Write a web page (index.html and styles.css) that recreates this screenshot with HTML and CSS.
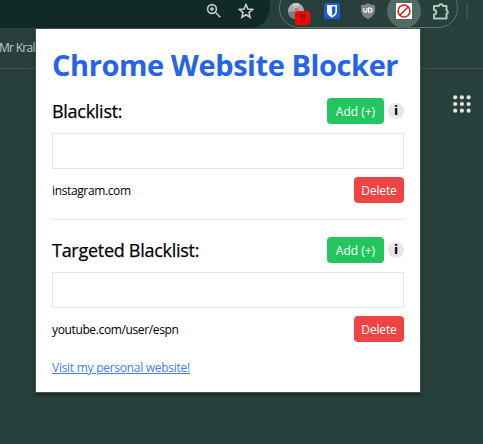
FILE: index.html
```html
<!DOCTYPE html>
<html lang="en">
<head>
<meta charset="utf-8">
<title>Chrome Website Blocker</title>
<link rel="stylesheet" href="styles.css">
</head>
<body>
<header class="toolbar">
  <div class="omnibox">
    <svg class="tool zoom" viewBox="0 0 16 16"><circle cx="6" cy="6" r="4.4"/><path d="M9.3 9.3 14.3 14.3M4 6h4M6 4v4"/></svg>
    <svg class="tool" viewBox="0 0 16 16"><path d="M8 1.5 9.9 6l4.8.4-3.7 3.2 1.1 4.7L8 11.8l-4.1 2.5L5 9.6 1.3 6.4 6.1 6z"/></svg>
  </div>
  <div class="extensions">
    <div class="ext avatar"><svg viewBox="0 0 16 16"><circle cx="8" cy="8" r="8" fill="#a9acaa"/><path d="M8 8 0 9a8 8 0 0 0 7 7z" fill="#777e7b"/><path d="M8 8 4 1a8 8 0 0 1 8 0z" fill="#c5c6c5"/><circle cx="8.5" cy="6.5" r="2" fill="#b77b75"/></svg><span class="badge">!!</span></div>
    <div class="ext"><svg viewBox="0 0 16 16"><rect width="16" height="16" rx="2" fill="#175ddc"/><path d="M3 2h10v6.5c0 3-2.5 4.8-5 6-2.500-1.200-5-3-5-6z" fill="#fff"/><path d="M8 3.600h3.400v5c0 1.800-1.500 3-3.400 4.100z" fill="#175ddc"/></svg></div>
    <div class="ext"><svg viewBox="0 0 16 16"><path d="M8 0c2 1.500 4 2 7 2v5c0 4.500-3 7-7 9-4-2-7-4.500-7-9V2c3 0 5-.5 7-2z" fill="#808483"/><path d="M3.700 5v2.600a1.600 1.600 0 0 0 3.200 0V5M8.700 5v4.200h1.200a2.100 2.100 0 0 0 0-4.200z" fill="none" stroke="#fff" stroke-width="1.200"/></svg></div>
    <div class="ext active"><svg viewBox="0 0 16 16"><rect width="16" height="16" fill="#fff"/><circle cx="8" cy="8" r="5.900" fill="none" stroke="#e01b1b" stroke-width="1.500"/><path d="M4 12 12 4" stroke="#e01b1b" stroke-width="1.500"/></svg></div>
    <div class="ext puzzle"><svg viewBox="0 0 18 18"><path d="M2 4H7A2 1.800 0 0 1 11 4H14.500V8.500A1.700 1.800 0 0 1 14.500 12V16.500H2V12.500A2.200 2.200 0 0 0 2 8.100Z" fill="none" stroke="#a9cbc0" stroke-width="2" stroke-linejoin="round"/></svg></div>
  </div>
  <div class="divider"></div>
</header>
<div class="bookmarks">Mr Krabs</div>
<div class="page">
  <svg class="apps" viewBox="0 0 18 18"><circle cx="2.200" cy="2.300" r="2.100"/><circle cx="8.900" cy="2.300" r="2.100"/><circle cx="15.600" cy="2.300" r="2.100"/><circle cx="2.200" cy="9" r="2.100"/><circle cx="8.900" cy="9" r="2.100"/><circle cx="15.600" cy="9" r="2.100"/><circle cx="2.200" cy="15.700" r="2.100"/><circle cx="8.900" cy="15.700" r="2.100"/><circle cx="15.600" cy="15.700" r="2.100"/></svg>
</div>
<main class="popup">
  <h1>Chrome Website Blocker</h1>
  <section>
    <div class="row head"><h2>Blacklist:</h2><button class="btn add">Add (+)</button><span class="info">i</span></div>
    <input class="field" type="text" aria-label="Website">
    <div class="row item"><span class="site">instagram.com</span><button class="btn delete">Delete</button></div>
  </section>
  <hr>
  <section>
    <div class="row head"><h2>Targeted Blacklist:</h2><button class="btn add">Add (+)</button><span class="info">i</span></div>
    <input class="field" type="text" aria-label="Targeted website">
    <div class="row item"><span class="site">youtube.com/user/espn</span><button class="btn delete">Delete</button></div>
  </section>
  <a class="visit" href="#">Visit my personal website!</a>
</main>
</body>
</html>
```
FILE: styles.css
```css
* { box-sizing: border-box; }
body {
  margin: 0;
  height: 444px;
  overflow: hidden;
  background: #27403b;
  font-family: "Open Sans", "Noto Sans", sans-serif;
  font-size: 12px;
  color: #000;
}
svg { display: block; }
.toolbar { display: flex; height: 28px; }
.omnibox {
  display: flex;
  gap: 16px;
  width: 270px;
  height: 28px;
  padding: 3px 0 0 206px;
  background: #122a26;
  border-bottom-right-radius: 18px 22px;
}
.tool { width: 16px; height: 16px; fill: none; stroke: #c5cbc9; stroke-width: 1.6; }
.zoom path { stroke-width: 1.5; }
.extensions {
  display: flex;
  gap: 20px;
  width: 179px;
  height: 40px;
  margin: -12px 0 0 9px;
  padding: 14px 0 0 8px;
  border: 1px solid #66736f;
  border-radius: 20px;
}
.ext { position: relative; flex: none; width: 16px; height: 16px; }
.ext svg { position: relative; width: 16px; height: 16px; }
.active::before {
  content: "";
  position: absolute;
  inset: -9px;
  border-radius: 50%;
  background: #506c65;
}
.ext.puzzle svg { width: 18px; height: 18px; margin-top: -1px; }
.badge {
  position: absolute;
  left: 7px;
  top: 8px;
  width: 15px;
  height: 14px;
  border-radius: 3px;
  background: #f00;
  color: #200;
  font: 600 10px/14px "Open Sans", sans-serif;
  text-align: center;
}
.divider { width: 2px; height: 16px; margin: 3px 0 0 8px; background: #36544e; }
.bookmarks {
  height: 41px;
  padding-top: 12px;
  border-bottom: 1px solid #45504d;
  color: #c3c8c6;
  line-height: 16px;
  letter-spacing: -.7px;
  text-indent: -1px;
}
.page { display: flex; justify-content: flex-end; padding: 26px 12px 0 0; }
.apps { width: 18px; height: 18px; fill: #e2e4e3; }
.popup {
  position: absolute;
  left: 36px;
  top: 29px;
  width: 384px;
  height: 363px;
  padding: 16px;
  background: #fff;
  box-shadow: 0 0 0 1px #4a5250, 0 2px 4px 1px rgba(0, 0, 0, .4);
}
h1, h2 { margin: 0; white-space: nowrap; }
h1 { height: 36px; color: #2563eb; font-size: 29px; line-height: 40px; font-weight: 700; letter-spacing: -.42px; }
h2 { flex: 1; font-size: 18px; line-height: 28px; font-weight: 500; letter-spacing: -.28px; -webkit-text-stroke: .25px #000; }
.row { display: flex; align-items: center; }
.head { height: 28px; margin: 16px 0 8px; }
.btn {
  height: 26px;
  padding: 1px 0 0;
  border: 0;
  border-radius: 4px;
  color: #fff;
  font: 500 12px/25px "Open Sans", "Noto Sans", sans-serif;
  text-align: center;
}
.add { width: 57px; background: #22c55e; }
.delete { width: 50px; background: #ef4444; letter-spacing: -.15px; }
.info {
  width: 16px;
  height: 16px;
  margin-left: 4px;
  border-radius: 50%;
  background: #e5e7eb;
  font: 700 13px/16px "DejaVu Sans", sans-serif;
  font-size: 12px;
  text-align: center;
}
.field { display: block; width: 352px; height: 36px; border: 1px solid #e5e7eb; outline: 0; }
.item { justify-content: space-between; height: 26px; margin-top: 8px; }
.site { letter-spacing: -.37px; }
hr { height: 1px; margin: 16px 0 0; border: 0; background: #e5e7eb; }
.visit { display: inline-block; margin-top: 16px; color: #3b82f6; line-height: 20px; letter-spacing: -.27px; text-decoration: underline; }
```
